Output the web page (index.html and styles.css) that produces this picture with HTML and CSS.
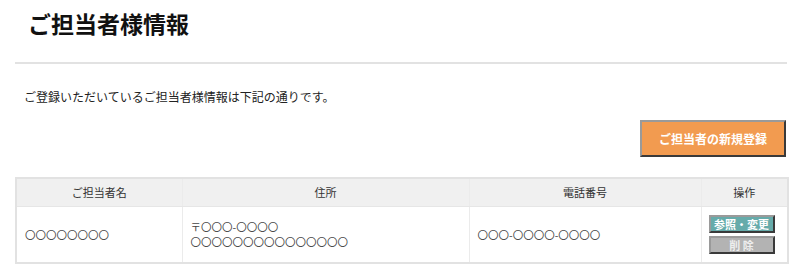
FILE: index.html
```html
<!DOCTYPE html>
<html lang="ja">
<head>
<meta charset="utf-8">
<title>ご担当者様情報</title>
<link rel="stylesheet" href="styles.css">
</head>
<body>
<div class="page">
  <header class="page-head">
    <h1 class="title">ご担当者様情報</h1>
  </header>
  <p class="intro">ご登録いただいているご担当者様情報は下記の通りです。</p>
  <div class="actions">
    <button class="btn btn-new">ご担当者の新規登録</button>
  </div>
  <table class="list">
    <thead>
      <tr>
        <th class="c-name">ご担当者名</th>
        <th class="c-addr">住所</th>
        <th class="c-tel">電話番号</th>
        <th class="c-op">操作</th>
      </tr>
    </thead>
    <tbody>
      <tr>
        <td class="maru">〇〇〇〇〇〇〇〇</td>
        <td class="maru addr"><span class="line">〒〇〇〇-〇〇〇〇</span><span class="line">〇〇〇〇〇〇〇〇〇〇〇〇〇〇〇</span></td>
        <td class="maru">〇〇〇-〇〇〇〇-〇〇〇〇</td>
        <td class="op">
          <button class="btn btn-small btn-edit">参照・変更</button>
          <button class="btn btn-small btn-del">削 除</button>
        </td>
      </tr>
    </tbody>
  </table>
</div>
</body>
</html>
```

FILE: styles.css
```css
* { box-sizing: border-box; }
html, body { margin: 0; padding: 0; background: #fff; }
body {
  font-family: "Noto Sans CJK JP", "Noto Sans", sans-serif;
  color: #222;
  font-size: 12px;
}
.page {
  width: 772px;
  margin: 0 0 0 15px;
}
.page-head {
  height: 64px;
  padding: 8px 0 0 13px;
  border-bottom: 2px solid #e2e2e2;
}
.title {
  margin: 0;
  font-size: 23px;
  line-height: 30px;
  font-weight: bold;
  color: #111;
}
.intro {
  margin: 24px 0 0 9px;
  font-size: 12px;
  line-height: 18px;
  color: #222;
}
.actions {
  display: flex;
  justify-content: flex-end;
  margin-top: 14px;
  padding-right: 1px;
}
.btn {
  font-family: "Noto Sans CJK JP", sans-serif;
  font-weight: bold;
  color: #fff;
  cursor: pointer;
  border-style: solid;
  border-width: 2px;
  border-color: #9a9a9a #3a3a3a #3a3a3a #9a9a9a;
  padding: 0;
}
.btn-new {
  width: 146px;
  height: 37px;
  background: #f29b50;
  font-size: 12px;
}
.list {
  width: 772px;
  margin-top: 20px;
  border-collapse: collapse;
  border: 2px solid #e2e2e2;
  table-layout: fixed;
}
.list th, .list td {
  border-left: 1px solid #ebebeb;
  border-right: 1px solid #ebebeb;
}
.list th {
  height: 28px;
  background: #f0f0f0;
  font-size: 11px;
  font-weight: normal;
  color: #333;
  text-align: center;
  padding: 0;
  border-bottom: 1px solid #e6e6e6;
}
.c-name { width: 166px; }
.c-addr { width: 287px; }
.c-tel { width: 232px; }
.c-op { width: 87px; }
.list td {
  height: 57px;
  padding: 0 8px;
  vertical-align: middle;
  color: #444;
}
.maru {
  font-size: 10.5px;
  line-height: 15px;
}
.addr .line {
  display: block;
  line-height: 15.5px;
}
.list td.op {
  padding: 0 0 0 7px;
}
.op .btn-small {
  display: block;
  margin: 0;
}
.btn-small {
  width: 66px;
  height: 18px;
  font-size: 11px;
  line-height: 14px;
}
.op .btn-edit {
  background: #66abaa;
  margin-bottom: 3px;
}
.btn-del {
  background: #b3b3b3;
  color: #eee;
}
```
